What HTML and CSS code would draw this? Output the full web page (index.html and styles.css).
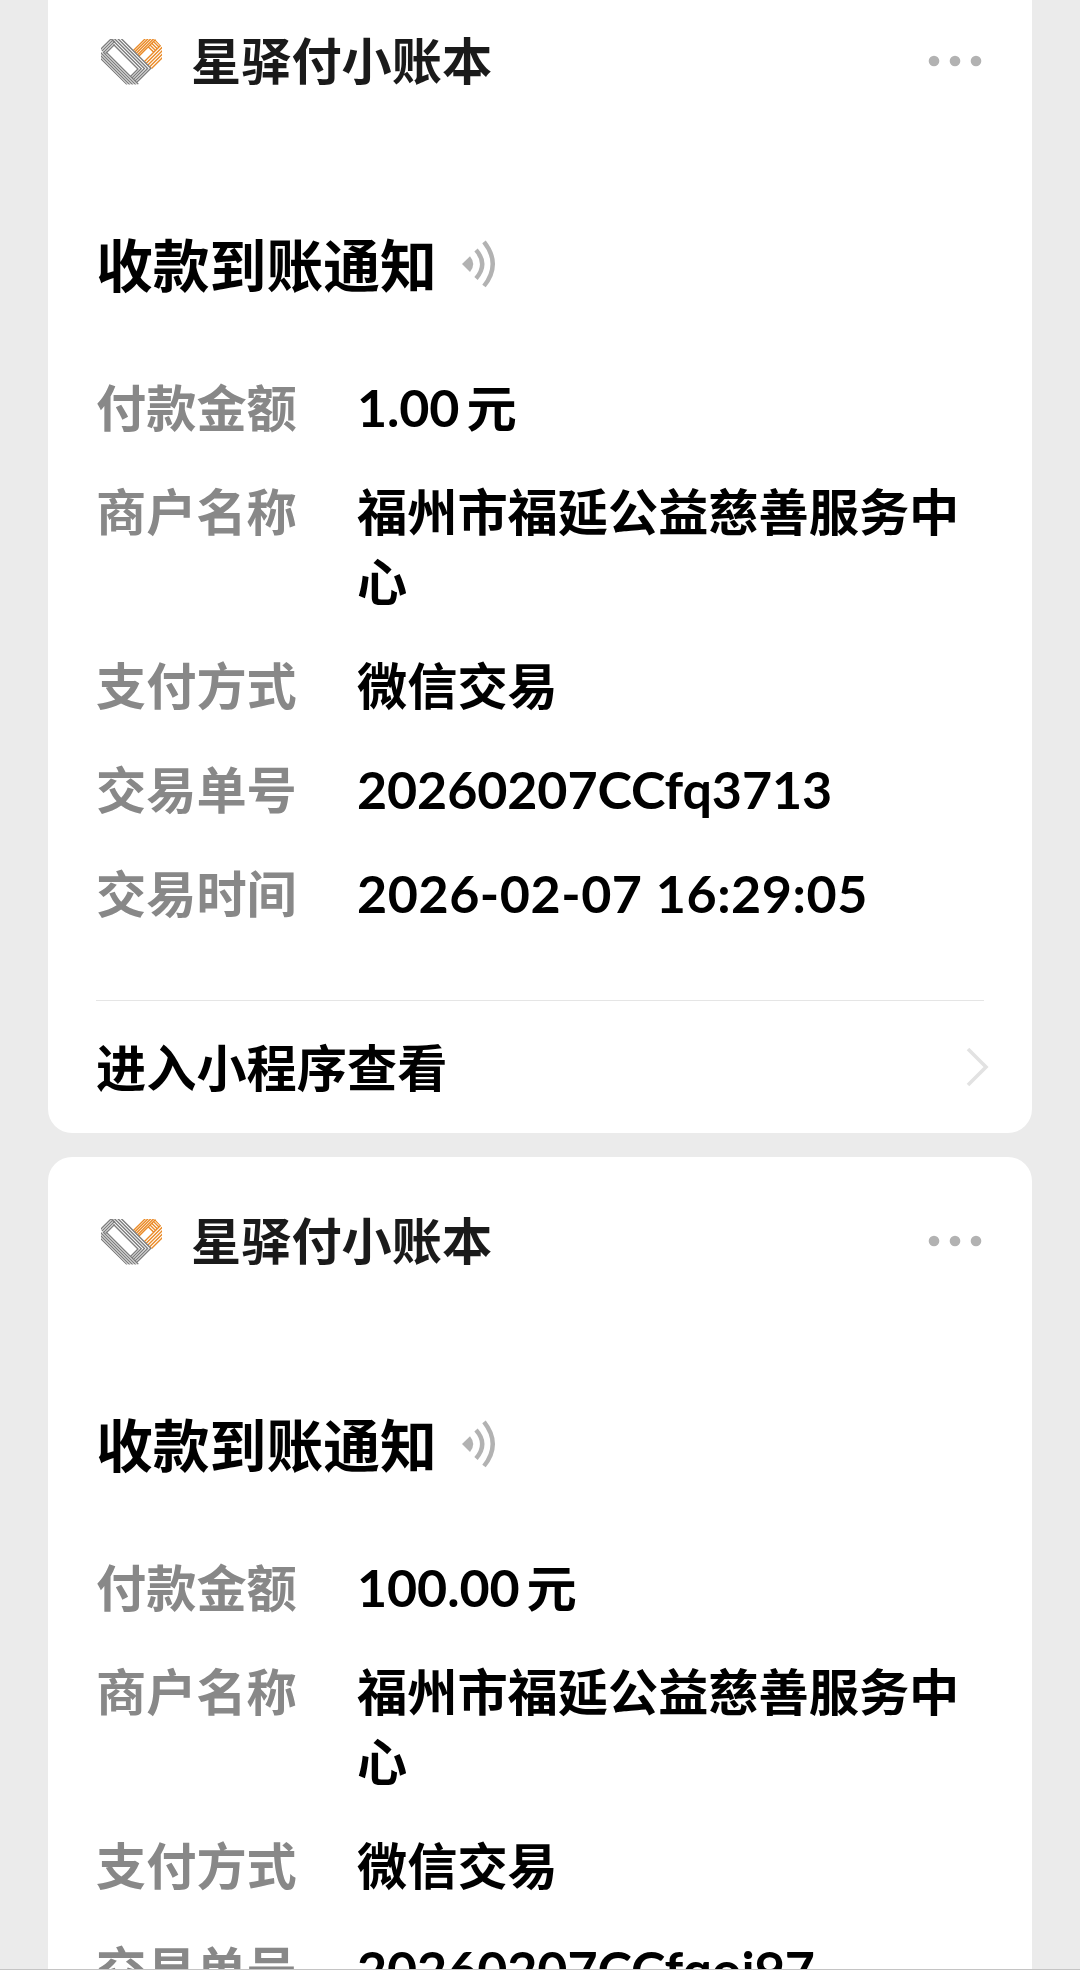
FILE: index.html
```
<!DOCTYPE html>
<html lang="zh-CN">
<head>
    <meta charset="UTF-8">
    <meta name="viewport" content="width=device-width, initial-scale=1.0">
    <title>星驿付小账本</title>
    <link rel="stylesheet" href="styles.css">
</head>
<body>
    <!-- shared icons -->
    <svg class="sprite" width="0" height="0">
        <symbol id="logo" viewBox="0 0 62 46">
            <clipPath id="logoClip"><path d="M8 0H54L61 8V21L37 45.500H25L0 21V8Z"/></clipPath>
            <g clip-path="url(#logoClip)" fill="none" stroke-width="1.400">
                <g stroke="#ea8a26">
                    <path d="M32.500 11.500L45 -1M34 12.800L47.800 -1M35.300 14.300L50.600 -1M36.700 15.700L53.400 -1M38 17L56 -1"/>
                    <path d="M47.200 7.700L52.800 13.300M49 6L54.500 11.500M50.700 4.200L56.200 9.800M52.500 2.500L58 8M54 1L59.500 6.500"/>
                    <path d="M43.500 22.500L62 4M45.200 24.200L62 7.500M47 26L62 11M48.700 27.700L62 14.500M50.500 29.500L62 18"/>
                </g>
                <g stroke="#7d7d7d">
                    <path d="M12.500 5.500L37 30L29.500 37.500"/>
                    <path d="M9.400 -1L40.200 29.800L31 39"/>
                    <path d="M12.800 -1L43.400 29.600L32.500 40.500"/>
                    <path d="M16.200 -1L46.600 29.400L34 42"/>
                    <path d="M19.600 -1L49.800 29.200L35.500 43.500"/>
                    <path d="M5 13L38 46M2 13L35 46M-1 13L32 46M-1 16L29 46M-1 19L26 46"/>
                    <path d="M-1 11L11 -1M1 12L12.500 .5M2.500 13.500L14 2M4.500 14.500L13.500 5.500"/>
                </g>
            </g>
        </symbol>
        <symbol id="sound" viewBox="0 0 34 48">
            <path fill="#b2b2b2" d="M0 24L8 16.200Q14.500 24 8 32Z"/>
            <g fill="none" stroke="#b2b2b2" stroke-width="4.400">
                <path d="M14 10Q26.500 24 14 38.500"/>
                <path d="M22 1.800Q39.500 24 22 46"/>
            </g>
        </symbol>
        <symbol id="more" viewBox="0 0 54 12">
            <g fill="#b2b2b2">
                <circle cx="6" cy="6" r="5.300"/>
                <circle cx="27" cy="6" r="5.300"/>
                <circle cx="48" cy="6" r="5.300"/>
            </g>
        </symbol>
        <symbol id="arrow" viewBox="0 0 24 40">
            <path d="M2 2L20 20L2 38" fill="none" stroke="#e2e2e2" stroke-width="3.600"/>
        </symbol>
    </svg>

    <div class="list">
        <div class="card">
            <div class="header">
                <svg class="logo"><use href="#logo"/></svg>
                <span class="name">星驿付小账本</span>
                <svg class="more"><use href="#more"/></svg>
            </div>
            <div class="title">
                <span>收款到账通知</span>
                <svg class="sound"><use href="#sound"/></svg>
            </div>
            <div class="info">
                <div class="row">
                    <div class="label">付款金额</div>
                    <div class="value"><span class="num amount">1.00</span>元</div>
                </div>
                <div class="row">
                    <div class="label">商户名称</div>
                    <div class="value">福州市福延公益慈善服务中心</div>
                </div>
                <div class="row">
                    <div class="label">支付方式</div>
                    <div class="value">微信交易</div>
                </div>
                <div class="row">
                    <div class="label">交易单号</div>
                    <div class="value num">20260207CCfq3713</div>
                </div>
                <div class="row">
                    <div class="label">交易时间</div>
                    <div class="value num time">2026-02-07 16:29:05</div>
                </div>
            </div>
            <div class="footer">
                <span class="link">进入小程序查看</span>
                <svg class="arrow"><use href="#arrow"/></svg>
            </div>
        </div>

        <div class="card">
            <div class="header">
                <svg class="logo"><use href="#logo"/></svg>
                <span class="name">星驿付小账本</span>
                <svg class="more"><use href="#more"/></svg>
            </div>
            <div class="title">
                <span>收款到账通知</span>
                <svg class="sound"><use href="#sound"/></svg>
            </div>
            <div class="info">
                <div class="row">
                    <div class="label">付款金额</div>
                    <div class="value"><span class="num amount">100.00</span>元</div>
                </div>
                <div class="row">
                    <div class="label">商户名称</div>
                    <div class="value">福州市福延公益慈善服务中心</div>
                </div>
                <div class="row">
                    <div class="label">支付方式</div>
                    <div class="value">微信交易</div>
                </div>
                <div class="row">
                    <div class="label">交易单号</div>
                    <div class="value num">20260207CCfqoi97</div>
                </div>
            </div>
        </div>
    </div>
</body>
</html>
```

FILE: styles.css
```
* {
    box-sizing: border-box;
}
body {
    margin: 0;
    height: 1970px;
    overflow: hidden;
    background-color: #ebebeb;
    font-family: Lato, "Noto Sans CJK SC", sans-serif;
    font-size: 50.2px;
    font-weight: 700;
    color: #000;
}
.sprite {
    display: block;
}
.list {
    height: 1970px;
    overflow: hidden;
    padding: 0 48px;
    border-bottom: 1px solid #c4c4c4;
}
.card {
    height: 1156px;
    padding: 0 48px;
    border-radius: 24px;
    background-color: #fff;
}
.card:first-child {
    margin-top: -23px;
}
.card + .card {
    margin-top: 24px;
}
.header {
    display: flex;
    align-items: center;
    height: 170px;
}
.logo {
    width: 62px;
    height: 46px;
    margin-left: 5px;
}
.name {
    margin-left: 28px;
    padding-bottom: 8px;
    color: #1a1a1a;
}
.more {
    width: 54px;
    height: 12px;
    margin-left: auto;
    margin-right: 2px;
    margin-bottom: 2px;
}
.title {
    display: flex;
    align-items: center;
    height: 80px;
    margin-top: 75px;
    font-size: 56.8px;
}
.sound {
    width: 34px;
    height: 48px;
    margin-top: 4px;
    margin-left: 25px;
}
.info {
    display: flex;
    flex-direction: column;
    gap: 35px;
    height: 627px;
    margin-top: 71px;
}
.row {
    display: flex;
    height: 69.300px;
    line-height: 69.300px;
}
.row:nth-child(2) {
    height: 138.600px;
}
.label {
    width: 261px;
    flex-shrink: 0;
    color: #888;
}
.value {
    width: 610px;
}
.num {
    font-size: 52px;
    letter-spacing: -0.1px;
}
.time {
    letter-spacing: 0.55px;
}
.amount {
    margin-right: 7px;
    line-height: 1;
}
.footer {
    display: flex;
    align-items: center;
    justify-content: space-between;
    height: 133px;
    border-top: 1px solid #e5e5e5;
}
.link {
    padding-bottom: 4px;
}
.arrow {
    width: 24px;
    height: 40px;
    margin-right: -6px;
}
```
